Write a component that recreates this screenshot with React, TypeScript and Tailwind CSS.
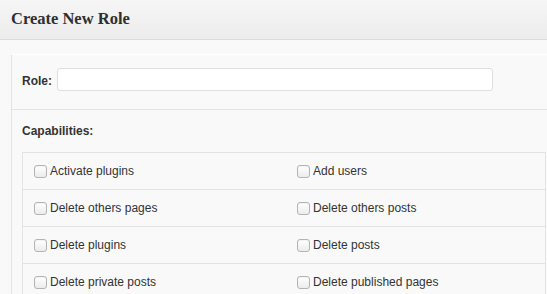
const capabilities: [string, string][] = [
  ["Activate plugins", "Add users"],
  ["Delete others pages", "Delete others posts"],
  ["Delete plugins", "Delete posts"],
  ["Delete private posts", "Delete published pages"],
];

function Checkbox({ label }: { label: string }) {
  return (
    <label className="flex items-center gap-[3px] pl-[11px]">
      <span className="block h-[13px] w-[13px] rounded-[3px] border border-[#b4b4b4] bg-gradient-to-b from-white to-[#ececec] shadow-[inset_0_1px_1px_rgba(0,0,0,0.05)]" />
      <span className="text-[12px] text-[#333]">{label}</span>
    </label>
  );
}

export default function App() {
  return (
    <div
      className="h-[294px] w-[547px] overflow-hidden bg-[#f9f9f9]"
      style={{ fontFamily: '"Liberation Sans", Arial, sans-serif' }}
    >
      <div className="flex h-[40px] items-center border-b border-[#dcdcdc] bg-gradient-to-b from-[#f6f6f6] to-[#ececec] pl-[11px]">
        <h2
          className="text-[16.5px] font-bold text-[#2f2f2f]"
          style={{ fontFamily: '"Liberation Serif", Georgia, serif' }}
        >
          Create New Role
        </h2>
      </div>

      <div className="pl-[11px] pt-[14px]">
        <div className="border-l border-t border-[#e3e3e3] border-t-white">
          <div className="flex h-[55px] items-start border-b border-[#e3e3e3] pl-[10px] pt-[13px]">
            <span className="mr-[5px] mt-[4px] text-[12px] font-bold text-[#333]">Role:</span>
            <input
              type="text"
              className="h-[23px] w-[436px] rounded-[3px] border border-[#dfdfdf] bg-white outline-none"
            />
          </div>

          <div className="flex h-[42px] items-center pl-[10px]">
            <span className="text-[12px] font-bold text-[#333]">Capabilities:</span>
          </div>

          <div className="ml-[10px] mr-[1px] border-l border-r border-t border-[#e3e3e3]">
            {capabilities.map(([a, b]) => (
              <div key={a} className="grid h-[37px] grid-cols-[263px_1fr] items-center border-b border-[#e3e3e3]">
                <Checkbox label={a} />
                <Checkbox label={b} />
              </div>
            ))}
          </div>
        </div>
      </div>
    </div>
  );
}
